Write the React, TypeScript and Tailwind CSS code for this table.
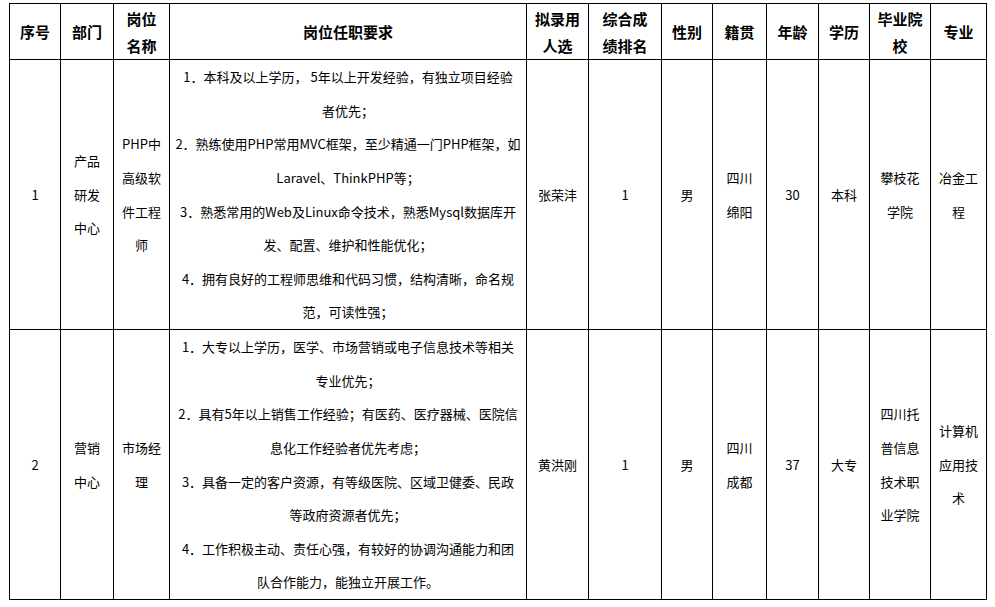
import React from 'react';

const colWidths = ['w-[51px]', 'w-[53px]', 'w-[56px]', 'w-[357px]', 'w-[62px]', 'w-[73px]', 'w-[51px]', 'w-[54px]', 'w-[52px]', 'w-[51px]', 'w-[61px]', 'w-[56px]'];

const headers: string[][] = [
  ['序号'],
  ['部门'],
  ['岗位', '名称'],
  ['岗位任职要求'],
  ['拟录用', '人选'],
  ['综合成', '绩排名'],
  ['性别'],
  ['籍贯'],
  ['年龄'],
  ['学历'],
  ['毕业院', '校'],
  ['专业'],
];

type Row = string[][];

const rows: Row[] = [
  [
    ['1'],
    ['产品', '研发', '中心'],
    ['PHP中', '高级软', '件工程', '师'],
    [
      '1．本科及以上学历， 5年以上开发经验，有独立项目经验',
      '者优先；',
      '2．熟练使用PHP常用MVC框架，至少精通一门PHP框架，如',
      'Laravel、ThinkPHP等；',
      '3．熟悉常用的Web及Linux命令技术，熟悉Mysql数据库开',
      '发、配置、维护和性能优化；',
      '4．拥有良好的工程师思维和代码习惯，结构清晰，命名规',
      '范，可读性强；',
    ],
    ['张荣沣'],
    ['1'],
    ['男'],
    ['四川', '绵阳'],
    ['30'],
    ['本科'],
    ['攀枝花', '学院'],
    ['冶金工', '程'],
  ],
  [
    ['2'],
    ['营销', '中心'],
    ['市场经', '理'],
    [
      '1．大专以上学历，医学、市场营销或电子信息技术等相关',
      '专业优先；',
      '2．具有5年以上销售工作经验；有医药、医疗器械、医院信',
      '息化工作经验者优先考虑；',
      '3．具备一定的客户资源，有等级医院、区域卫健委、民政',
      '等政府资源者优先；',
      '4．工作积极主动、责任心强，有较好的协调沟通能力和团',
      '队合作能力，能独立开展工作。',
    ],
    ['黄洪刚'],
    ['1'],
    ['男'],
    ['四川', '成都'],
    ['37'],
    ['大专'],
    ['四川托', '普信息', '技术职', '业学院'],
    ['计算机', '应用技', '术'],
  ],
];

export default function App() {
  return (
    <div className="w-[995px] h-[607px] bg-white pt-[3px] pl-[9px] text-black font-['Noto_Sans_CJK_SC',sans-serif]">
      <table className="table-fixed border-collapse w-[978px]">
        <colgroup>
          {colWidths.map((w, i) => (
            <col key={i} className={w} />
          ))}
        </colgroup>
        <thead>
          <tr>
            {headers.map((lines, i) => (
              <th key={i} className="h-[56px] border border-black p-0 align-middle text-center text-[15px] font-bold leading-[27px]">
                {lines.map((l, j) => (
                  <div key={j} className="whitespace-nowrap">{l}</div>
                ))}
              </th>
            ))}
          </tr>
        </thead>
        <tbody>
          {rows.map((row, r) => (
            <tr key={r}>
              {row.map((lines, i) => (
                <td key={i} className="h-[270px] border border-black p-0 align-middle text-center text-[13px] leading-[33.6px]">
                  {lines.map((l, j) => (
                    <div key={j} className="whitespace-nowrap">{l}</div>
                  ))}
                </td>
              ))}
            </tr>
          ))}
        </tbody>
      </table>
    </div>
  );
}
